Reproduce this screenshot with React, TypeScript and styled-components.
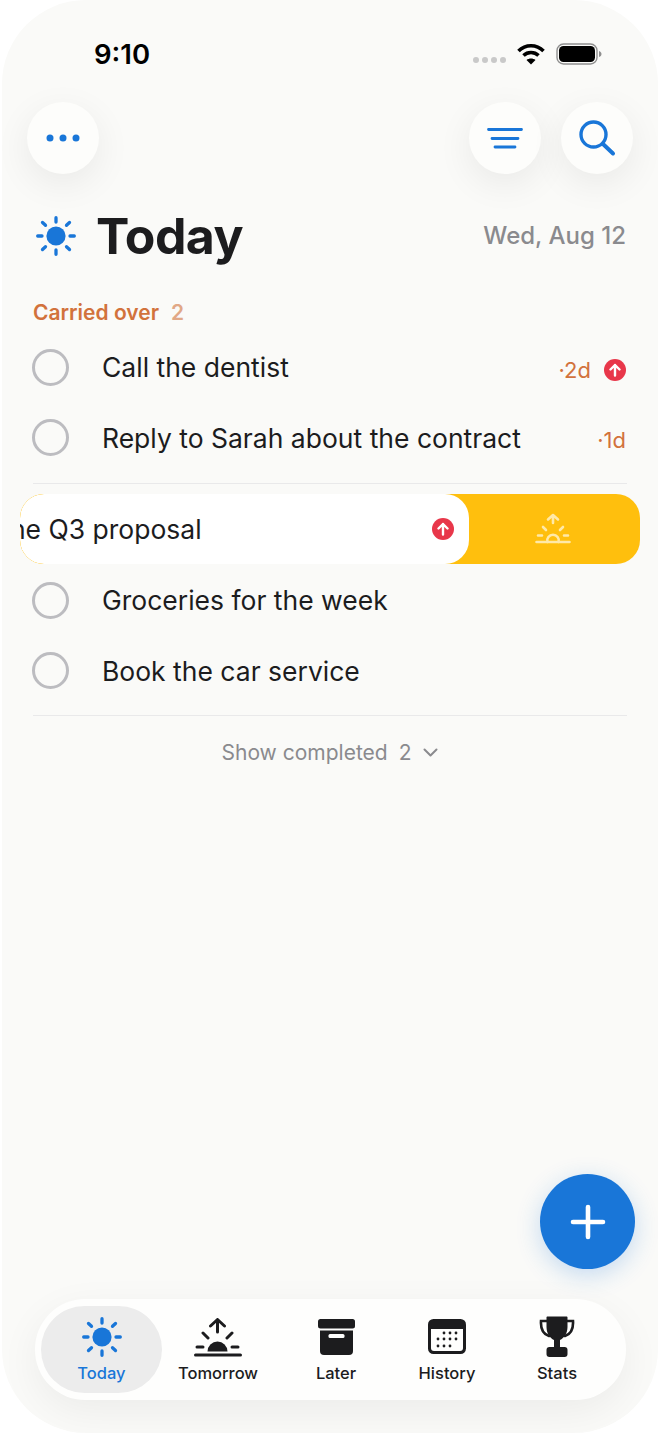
import React from 'react'
import styled, { createGlobalStyle } from 'styled-components'

const Global = createGlobalStyle`
  html, body {
    margin: 0;
    padding: 0;
    background: #fff;
  }
  * {
    box-sizing: border-box;
  }
`

const BLUE = '#1976d8'
const INK = '#1c1c1e'
const GREY = '#8a8a8e'
const ORANGE = '#d2723c'

const Screen = styled.div`
  position: relative;
  display: flex;
  flex-direction: column;
  width: 656px;
  height: 1433px;
  margin: 0 2px;
  border-radius: 84px;
  overflow: hidden;
  background: #fafaf8;
  font-family: Inter, 'Liberation Sans', sans-serif;
  color: ${INK};
`

const StatusBar = styled.div`
  display: flex;
  justify-content: space-between;
  align-items: flex-start;
  height: 102px;
  padding: 37px 56px 0 92px;
`

const Time = styled.div`
  font-size: 27.5px;
  line-height: 34px;
  font-weight: 600;
  color: #000;
`

const StatusIcons = styled.div`
  display: flex;
  align-items: flex-start;
  padding-top: 6px;
`

const SignalDots = styled.div`
  display: flex;
  gap: 3px;
  margin: 14px 11px 0 0;

  span {
    width: 6px;
    height: 6px;
    border-radius: 50%;
    background: #c9c9c9;
  }
`

const Battery = styled.svg`
  margin-left: 11px;
`

const Toolbar = styled.div`
  display: flex;
  justify-content: space-between;
  padding: 0 25px;
`

const ToolGroup = styled.div`
  display: flex;
  gap: 20px;
`

const RoundButton = styled.button`
  display: flex;
  justify-content: center;
  align-items: center;
  width: 72px;
  height: 72px;
  padding: 0;
  border: 0;
  border-radius: 50%;
  background: #fdfdfb;
  box-shadow: 0 10px 36px rgba(0, 0, 0, 0.07);
`

const TitleRow = styled.div`
  display: flex;
  align-items: center;
  height: 52px;
  margin-top: 36px;
  padding: 0 32px 0 33px;
`

const Title = styled.h1`
  flex: 1;
  margin: 0 0 0 19px;
  font-size: 50px;
  line-height: 52px;
  font-weight: 700;
  letter-spacing: -0.6px;
`

const DateText = styled.div`
  margin-bottom: 2px;
  font-size: 24px;
  font-weight: 500;
  color: ${GREY};
`

const SectionLabel = styled.div`
  display: flex;
  gap: 12px;
  height: 24px;
  margin: 39px 0 7px;
  padding-left: 31px;
  font-size: 21px;
  line-height: 24px;
  font-weight: 600;
  color: ${ORANGE};

  span:last-child {
    opacity: 0.6;
  }
`

const Row = styled.div`
  display: flex;
  align-items: center;
  height: 70.5px;
  padding: 0 32px 0 30px;
`

const Check = styled.div`
  flex: none;
  width: 37px;
  height: 37px;
  margin-right: 33px;
  border: 3px solid #bcbcc0;
  border-radius: 50%;
`

const TaskText = styled.div`
  flex: 1;
  font-size: 26.5px;
  line-height: 34px;
  white-space: nowrap;
`

const Age = styled.span`
  margin-top: 5px;
  font-size: 22px;
  color: ${ORANGE};
`

const Badge = styled.span`
  display: flex;
  flex: none;
  justify-content: center;
  align-items: center;
  width: 22px;
  height: 22px;
  border-radius: 50%;
  background: #e8374a;
`

const RowBadge = styled(Badge)`
  margin: 5px 0 0 13px;
`

const Rule = styled.div<{ $top: number }>`
  height: 1px;
  margin: ${p => p.$top}px 31px 0;
  background: #e9e9ea;
`

const Swipe = styled.div`
  display: flex;
  height: 70px;
  margin: 10px 18px 1px;
  border-radius: 24px;
  overflow: hidden;
  background: #ffbf0d;
`

const SwipeCard = styled.div`
  display: flex;
  flex: none;
  align-items: center;
  width: 449px;
  padding-right: 15px;
  border-radius: 24px;
  overflow: hidden;
  background: #fff;
`

const SwipeText = styled(TaskText)`
  margin-left: -100px;
`

const SwipeAction = styled.div`
  display: flex;
  flex: 1;
  justify-content: center;
  align-items: center;
  padding-right: 3px;
`

const ShowCompleted = styled.div`
  display: flex;
  justify-content: center;
  align-items: center;
  height: 30px;
  margin-top: 21px;
  font-size: 21px;
  color: ${GREY};

  b {
    margin: 0 12px 0 11px;
    font-weight: 400;
  }
`

const Fab = styled.button`
  position: absolute;
  top: 1174px;
  right: 23px;
  display: flex;
  justify-content: center;
  align-items: center;
  width: 95px;
  height: 95px;
  padding: 0;
  border: 0;
  border-radius: 50%;
  background: ${BLUE};
  box-shadow: 0 6px 24px rgba(25, 118, 216, 0.24);
`

const TabBar = styled.nav`
  display: flex;
  width: 591px;
  height: 101px;
  margin: auto 0 33px 33px;
  padding: 7px 6px;
  border-radius: 50px;
  background: #fefefd;
  box-shadow: 0 12px 40px rgba(0, 0, 0, 0.06);
`

const Tab = styled.div<{ $width: number; $active?: boolean }>`
  display: flex;
  flex: none;
  flex-direction: column;
  align-items: center;
  width: ${p => p.$width}px;
  border-radius: 44px;
  background: ${p => (p.$active ? '#ececec' : 'transparent')};
  color: ${p => (p.$active ? BLUE : INK)};
`

const TabIcon = styled.div<{ $lift?: number }>`
  display: flex;
  justify-content: center;
  align-items: flex-end;
  height: 52px;
  padding-bottom: ${p => p.$lift ?? 0}px;
`

const TabLabel = styled.div`
  margin-top: 4px;
  font-size: 16.5px;
  line-height: 22px;
  font-weight: 450;
  white-space: nowrap;
`

const UpArrow = () => (
  <svg width="12" height="14" viewBox="0 0 12 14" fill="none" stroke="#fff" strokeWidth="2.4" strokeLinecap="round" strokeLinejoin="round">
    <path d="M6 12.5V2M1.5 6.5 6 2l4.5 4.5" />
  </svg>
)

const Sun = ({ color }: { color: string }) => (
  <svg width="42" height="42" viewBox="0 0 42 42" fill={color} stroke={color} strokeWidth="3.3" strokeLinecap="round">
    <circle cx="21" cy="21" r="9.6" stroke="none" />
    <path d="M21 2.700v4.300M21 35v4.300M2.700 21H7M35 21h4.300M7.500 7.500l3 2.800M34.500 7.500l-3 2.800M7.500 34.500l3-2.800M34.500 34.500l-3-2.800" fill="none" />
  </svg>
)

const Sunrise = () => (
  <svg width="48" height="40" viewBox="0 0 48 40" fill="none" stroke={INK} strokeWidth="3" strokeLinecap="round" strokeLinejoin="round">
    <path d="M1.500 37h45M23.500 14V1.800M16.500 8l7-6.500 7 6.500M3 29h6M38 29h6M9 15l5 5M38 15l-5 5" />
    <path d="M13.500 33.500a10 10 0 0 1 20 0z" fill={INK} stroke="none" />
  </svg>
)

const SunriseOutline = () => (
  <svg width="36" height="32" viewBox="0 0 36 32" fill="none" stroke="#ffe9a8" strokeWidth="2.600" strokeLinecap="round" strokeLinejoin="round">
    <path d="M1.500 29h33M18 10V2M13 6.500 18 2l5 4.500M3 22.500h4M29 22.500h4M8 14l3 3M28 14l-3 3" />
    <path d="M12.400 29a5.800 5.800 0 1 1 11.200 0" />
  </svg>
)

const Archive = () => (
  <svg width="37" height="36" viewBox="0 0 37 36" fill={INK}>
    <rect x="0" y="0" width="37" height="9.500" rx="2.500" />
    <path d="M2 11.500h33V32a4 4 0 0 1-4 4H6a4 4 0 0 1-4-4z" />
    <rect x="10.500" y="15" width="16" height="4" rx="1.500" fill="#fefefd" />
  </svg>
)

const HISTORY_DOTS = [
  [16, 14], [22, 14], [28, 14],
  [10, 20], [16, 20], [22, 20], [28, 20],
  [10, 27], [16, 27], [22, 27],
]

const Calendar = () => (
  <svg width="38" height="36" viewBox="0 0 38 36">
    <rect x="0" y="0" width="38" height="35" rx="5.500" fill={INK} />
    <path d="M3 10h32v19a3 3 0 0 1-3 3H6a3 3 0 0 1-3-3z" fill="#fefefd" />
    {HISTORY_DOTS.map(([x, y]) => (
      <circle key={`${x}-${y}`} cx={x} cy={y} r="1.400" fill={INK} />
    ))}
  </svg>
)

const Trophy = () => (
  <svg width="36" height="42" viewBox="0 0 36 42" fill={INK}>
    <path d="M7.500 1.500c0-.6.5-1 1-1h19c.5 0 1 .4 1 1V11c0 6.500-3.500 11-7.500 13v7h-6v-7C11 22 7.500 17.500 7.500 11z" />
    <path d="M8 5H2c-.5 8 2 13 8 15M28 5h6c.5 8-2 13-8 15" fill="none" stroke={INK} strokeWidth="2.600" strokeLinecap="round" />
    <rect x="7.500" y="31" width="21" height="10" rx="3" />
  </svg>
)

export default function App() {
  return (
    <>
      <Global />
      <Screen>
        <StatusBar>
          <Time>9:10</Time>
          <StatusIcons>
            <SignalDots>
              <span />
              <span />
              <span />
              <span />
            </SignalDots>
            <svg width="28" height="22" viewBox="0 0 28 22" fill="none" stroke="#000" strokeWidth="3.600">
              <path d="M1.500 8C8.500 1 19.500 1 26.500 8" />
              <path d="M6.500 12.500c4.200-4 10.800-4 15 0" />
              <path d="M14 21.500 9.500 17c2.500-2 6.500-2 9 0z" fill="#000" stroke="none" />
            </svg>
            <Battery width="46" height="22" viewBox="0 0 46 22">
              <rect x="1" y="1" width="40" height="20" rx="6.500" fill="none" stroke="#8f8f8f" strokeWidth="1.400" />
              <rect x="3" y="3" width="36" height="16" rx="4.500" fill="#000" />
              <path d="M43 8c1.500.5 2.500 1.500 2.500 3s-1 2.500-2.500 3z" fill="#8f8f8f" />
            </Battery>
          </StatusIcons>
        </StatusBar>

        <Toolbar>
          <RoundButton>
            <svg width="34" height="8" viewBox="0 0 34 8" fill={BLUE}>
              <circle cx="4" cy="4" r="3.500" />
              <circle cx="17" cy="4" r="3.500" />
              <circle cx="30" cy="4" r="3.500" />
            </svg>
          </RoundButton>
          <ToolGroup>
            <RoundButton>
              <svg width="36" height="22" viewBox="0 0 36 22" fill="none" stroke={BLUE} strokeWidth="2.800" strokeLinecap="round">
                <path d="M1.500 2.500h33M5 11.500h26M8 20h20" />
              </svg>
            </RoundButton>
            <RoundButton>
              <svg width="38" height="38" viewBox="0 0 38 38" fill="none" stroke={BLUE} strokeWidth="3.400" strokeLinecap="round">
                <circle cx="15.500" cy="15.500" r="12.500" />
                <path d="M25 25l10 9.500" strokeWidth="4" />
              </svg>
            </RoundButton>
          </ToolGroup>
        </Toolbar>

        <TitleRow>
          <Sun color={BLUE} />
          <Title>Today</Title>
          <DateText>Wed, Aug 12</DateText>
        </TitleRow>

        <SectionLabel>
          <span>Carried over</span>
          <span>2</span>
        </SectionLabel>

        <Row>
          <Check />
          <TaskText>Call the dentist</TaskText>
          <Age>·2d</Age>
          <RowBadge>
            <UpArrow />
          </RowBadge>
        </Row>
        <Row>
          <Check />
          <TaskText>Reply to Sarah about the contract</TaskText>
          <Age>·1d</Age>
        </Row>

        <Rule $top={10} />

        <Swipe>
          <SwipeCard>
            <SwipeText>Finish the Q3 proposal</SwipeText>
            <Badge>
              <UpArrow />
            </Badge>
          </SwipeCard>
          <SwipeAction>
            <SunriseOutline />
          </SwipeAction>
        </Swipe>

        <Row>
          <Check />
          <TaskText>Groceries for the week</TaskText>
        </Row>
        <Row>
          <Check />
          <TaskText>Book the car service</TaskText>
        </Row>

        <Rule $top={9} />

        <ShowCompleted>
          Show completed
          <b>2</b>
          <svg width="15" height="9" viewBox="0 0 15 9" fill="none" stroke={GREY} strokeWidth="2" strokeLinecap="round" strokeLinejoin="round">
            <path d="M1.500 1.500 7.500 7.500l6-6" />
          </svg>
        </ShowCompleted>

        <Fab>
          <svg width="36" height="36" viewBox="0 0 36 36" fill="none" stroke="#fff" strokeWidth="4.600" strokeLinecap="round">
            <path d="M18 3v30M3 18h30" />
          </svg>
        </Fab>

        <TabBar>
          <Tab $width={121} $active>
            <TabIcon>
              <Sun color={BLUE} />
            </TabIcon>
            <TabLabel>Today</TabLabel>
          </Tab>
          <Tab $width={112}>
            <TabIcon>
              <Sunrise />
            </TabIcon>
            <TabLabel>Tomorrow</TabLabel>
          </Tab>
          <Tab $width={124}>
            <TabIcon $lift={3}>
              <Archive />
            </TabIcon>
            <TabLabel>Later</TabLabel>
          </Tab>
          <Tab $width={98}>
            <TabIcon $lift={3}>
              <Calendar />
            </TabIcon>
            <TabLabel>History</TabLabel>
          </Tab>
          <Tab $width={122}>
            <TabIcon>
              <Trophy />
            </TabIcon>
            <TabLabel>Stats</TabLabel>
          </Tab>
        </TabBar>
      </Screen>
    </>
  )
}
